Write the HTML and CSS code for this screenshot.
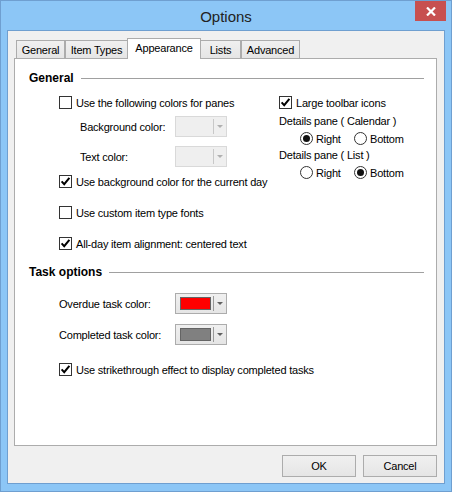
FILE: index.html
```html
<!DOCTYPE html>
<html>
<head>
<meta charset="utf-8">
<title>Options</title>
<link rel="stylesheet" href="styles.css">
</head>
<body>
<div class="window">
  <div class="titlebar">
    <span class="spacer"></span>
    <span class="title">Options</span>
    <button class="close" aria-label="Close"><svg width="10" height="9" viewBox="0 0 10 9"><path d="M1 0.5 L9 8.5 M9 0.5 L1 8.5" stroke="#fff" stroke-width="2.2"/></svg></button>
  </div>
  <div class="client">
    <div class="tabs">
      <div class="tab w-general">General</div>
      <div class="tab w-items">Item Types</div>
      <div class="tab active w-appear">Appearance</div>
      <div class="tab w-lists">Lists</div>
      <div class="tab w-adv">Advanced</div>
    </div>
    <div class="panel">
      <div class="group-head"><span>General</span><i class="rule"></i></div>
      <div class="general-grid">
        <div class="col">
          <div class="row cb-row m11"><span class="cb"></span><span class="cb-text">Use the following colors for panes</span></div>
          <div class="row combo-row m7"><span class="lbl lbl-sub">Background color:</span><span class="combo disabled"><span class="swatch-empty"></span><span class="sep"></span><span class="arrow"></span></span></div>
          <div class="row combo-row m9"><span class="lbl lbl-sub">Text color:</span><span class="combo disabled"><span class="swatch-empty"></span><span class="sep"></span><span class="arrow"></span></span></div>
          <div class="row cb-row m8"><span class="cb checked"><svg width="11" height="11" viewBox="0 0 11 11"><path d="M1.6 5.4 L4.2 8.2 L9.4 1.8" fill="none" stroke="#000" stroke-width="2"/></svg></span><span class="cb-text">Use background color for the current day</span></div>
          <div class="row cb-row m18"><span class="cb"></span><span class="cb-text">Use custom item type fonts</span></div>
          <div class="row cb-row m18"><span class="cb checked"><svg width="11" height="11" viewBox="0 0 11 11"><path d="M1.6 5.4 L4.2 8.2 L9.4 1.8" fill="none" stroke="#000" stroke-width="2"/></svg></span><span class="cb-text">All-day item alignment: centered text</span></div>
        </div>
        <div class="col">
          <div class="row cb-row m11"><span class="cb checked"><svg width="11" height="11" viewBox="0 0 11 11"><path d="M1.6 5.4 L4.2 8.2 L9.4 1.8" fill="none" stroke="#000" stroke-width="2"/></svg></span><span class="cb-text">Large toolbar icons</span></div>
          <div class="row text-row m5">Details pane ( Calendar )</div>
          <div class="row radio-row m4">
            <span class="opt"><span class="radio on"></span><span class="rb-text">Right</span></span>
            <span class="opt"><span class="radio"></span><span class="rb-text">Bottom</span></span>
          </div>
          <div class="row text-row m3">Details pane ( List )</div>
          <div class="row radio-row m4">
            <span class="opt"><span class="radio"></span><span class="rb-text">Right</span></span>
            <span class="opt"><span class="radio on"></span><span class="rb-text">Bottom</span></span>
          </div>
        </div>
      </div>
      <div class="group-head m15"><span>Task options</span><i class="rule"></i></div>
      <div class="task-body">
        <div class="row combo-row m14"><span class="lbl lbl-task">Overdue task color:</span><span class="combo"><span class="swatch red"></span><span class="sep"></span><span class="arrow"></span></span></div>
        <div class="row combo-row m10"><span class="lbl lbl-task">Completed task color:</span><span class="combo"><span class="swatch gray"></span><span class="sep"></span><span class="arrow"></span></span></div>
        <div class="row cb-row m18"><span class="cb checked"><svg width="11" height="11" viewBox="0 0 11 11"><path d="M1.6 5.4 L4.2 8.2 L9.4 1.8" fill="none" stroke="#000" stroke-width="2"/></svg></span><span class="cb-text">Use strikethrough effect to display completed tasks</span></div>
      </div>
    </div>
    <div class="buttons">
      <button class="btn">OK</button>
      <button class="btn">Cancel</button>
    </div>
  </div>
</div>
</body>
</html>
```

FILE: styles.css
```css
* { box-sizing: border-box; }
html, body { margin: 0; padding: 0; }
body {
  width: 452px;
  height: 492px;
  overflow: hidden;
  font-family: "Liberation Sans", Arial, sans-serif;
  font-size: 11px;
  letter-spacing: -0.2px;
  color: #000;
}
.window {
  width: 452px;
  height: 492px;
  background: #8cc6f6;
  border: 1px solid #6f9fd0;
  padding: 0 6px 7px;
  display: flex;
  flex-direction: column;
}
.titlebar {
  height: 29px;
  flex: none;
  display: grid;
  grid-template-columns: 1fr auto 1fr;
  align-items: start;
}
.title {
  font-size: 15px;
  letter-spacing: 0;
  color: #222;
  line-height: 29px;
  padding-top: 1px;
}
.close {
  justify-self: end;
  margin-right: -1px;
  width: 31px;
  height: 20px;
  border: 0;
  padding: 0;
  background: #c75050;
  display: flex;
  align-items: center;
  justify-content: center;
}
.client {
  flex: 1;
  border: 1px solid #6f9fd0;
  background: #f0f0f0;
  padding: 7px 7px 6px 6px;
  display: flex;
  flex-direction: column;
}
.tabs {
  height: 20px;
  flex: none;
  display: flex;
  align-items: flex-end;
  padding-left: 2px;
  position: relative;
  z-index: 1;
}
.tab {
  height: 18px;
  border: 1px solid #acacac;
  border-bottom: 0;
  background: linear-gradient(#f0f0f0, #e5e5e5);
  display: flex;
  align-items: center;
  justify-content: center;
  padding-top: 1px;
}
.tab.active {
  height: 21px;
  margin-bottom: -1px;
  background: #fff;
  padding-top: 0;
  padding-bottom: 2px;
}
.w-general { width: 49px; }
.w-items { width: 63px; }
.w-appear { width: 74px; margin-left: -1px; }
.w-lists { width: 41px; margin-left: -1px; }
.w-adv { width: 59px; }
.panel {
  flex: 1;
  background: #fff;
  border: 1px solid #acacac;
  padding: 12px 12px 0 14px;
  display: flex;
  flex-direction: column;
}
.group-head {
  height: 14px;
  display: flex;
  align-items: center;
  gap: 7px;
  font-weight: bold;
  font-size: 12px;
  letter-spacing: 0;
}
.rule {
  flex: 1;
  height: 1px;
  background: #a0a0a0;
}
.general-grid {
  margin-left: 30px;
  display: grid;
  grid-template-columns: 220px 1fr;
}
.task-body {
  margin-left: 30px;
  display: flex;
  flex-direction: column;
}
.col { display: flex; flex-direction: column; }
.row { display: flex; align-items: center; }
.cb-row { height: 13px; }
.combo-row { height: 21px; }
.text-row { height: 14px; }
.radio-row { height: 13px; padding-left: 21px; }
.m3 { margin-top: 3px; }
.m4 { margin-top: 4px; }
.m5 { margin-top: 5px; }
.m7 { margin-top: 7px; }
.m8 { margin-top: 8px; }
.m9 { margin-top: 9px; }
.m10 { margin-top: 10px; }
.m11 { margin-top: 11px; }
.m14 { margin-top: 14px; }
.m15 { margin-top: 15px; }
.m18 { margin-top: 18px; }
.cb {
  width: 13px;
  height: 13px;
  flex: none;
  border: 1px solid #333;
  background: #fff;
  display: flex;
}
.cb-text { margin-left: 4px; }
.lbl-sub { width: 116px; padding-left: 21px; }
.lbl-task { width: 116px; }
.combo {
  width: 52px;
  height: 21px;
  border: 1px solid #acacac;
  background: linear-gradient(#f0f0f0, #e5e5e5);
  display: flex;
  align-items: center;
  padding-left: 4px;
}
.combo.disabled {
  border-color: #d9d9d9;
  background: #efefef;
}
.swatch {
  width: 31px;
  height: 13px;
  border: 1px solid #646464;
}
.swatch.red { background: #ff0000; }
.swatch.gray { background: #808080; }
.swatch-empty { width: 31px; height: 13px; }
.sep {
  width: 1px;
  height: 15px;
  margin-left: 2px;
  background: #9a9a9a;
}
.combo.disabled .sep { background: #c8c8c8; }
.arrow {
  flex: 1;
  height: 4px;
  position: relative;
}
.arrow::after {
  content: "";
  position: absolute;
  left: 3px;
  top: 0;
  border-left: 3px solid transparent;
  border-right: 3px solid transparent;
  border-top: 3px solid #606060;
}
.combo.disabled .arrow::after { border-top-color: #b0b0b0; }
.opt { display: flex; align-items: center; width: 54px; }
.radio {
  width: 13px;
  height: 13px;
  flex: none;
  border: 1px solid #333;
  border-radius: 50%;
  background: #fff;
  display: flex;
  align-items: center;
  justify-content: center;
}
.radio.on::after {
  content: "";
  width: 7px;
  height: 7px;
  border-radius: 50%;
  background: #111;
}
.rb-text { margin-left: 3px; }
.buttons {
  margin-top: 9px;
  display: flex;
  justify-content: flex-end;
  gap: 7px;
}
.btn {
  width: 74px;
  height: 22px;
  border: 1px solid #acacac;
  background: linear-gradient(#f0f0f0, #e5e5e5);
  font-family: inherit;
  font-size: 11px;
  letter-spacing: -0.2px;
  color: #000;
  padding: 0;
}
```
